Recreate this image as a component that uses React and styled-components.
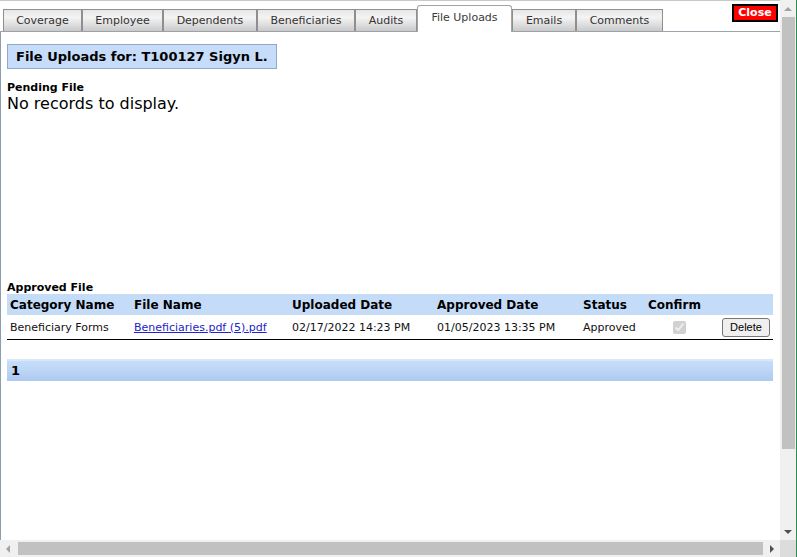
import React from 'react';
import styled, { createGlobalStyle } from 'styled-components';

const GlobalStyle = createGlobalStyle`
  html, body {
    margin: 0;
    padding: 0;
    background: #ffffff;
  }
  body {
    font-family: "DejaVu Sans", Verdana, sans-serif;
    color: #000000;
  }
`;

const StyledWindow = styled.div`
  width: 796px;
  height: 557px;
  border-right: 1px solid #2e8b57;
  display: grid;
  grid-template-columns: 780px 16px;
  grid-template-rows: 540px 17px;
  overflow: hidden;
  background: #ffffff;
`;

const StyledViewport = styled.div`
  overflow: hidden;
  border-top: 1px solid #c9c9c9;
  display: flex;
  flex-direction: column;
`;

const StyledTabBar = styled.div`
  display: flex;
  align-items: flex-end;
  height: 30px;
  padding-left: 3px;
  padding-right: 2px;
  border-bottom: 1px solid #9aa3ab;
  flex-shrink: 0;
`;

const StyledTab = styled.div`
  box-sizing: border-box;
  width: ${props => props.width}px;
  height: ${props => (props.active ? 27 : 22)}px;
  margin-bottom: ${props => (props.active ? '-1px' : '0')};
  border: 1px solid ${props => (props.active ? '#a4a4a4' : '#8f8f8f')};
  border-bottom: ${props => (props.active ? 'none' : '0')};
  border-radius: ${props => (props.active ? '3px 3px 0 0' : '0')};
  background: ${props => props.active
    ? '#ffffff'
    : 'linear-gradient(to bottom, #e6e6e6 0%, #f4f4f4 35%, #dedede 70%, #c9c9c9 100%)'};
  color: ${props => (props.active ? '#3a3a3a' : '#333333')};
  font-size: 11px;
  display: flex;
  align-items: center;
  justify-content: center;
  padding-bottom: ${props => (props.active ? '3px' : '0')};
  white-space: nowrap;
  cursor: pointer;
`;

const StyledClose = styled.button`
  margin-left: auto;
  align-self: flex-start;
  margin-top: 3px;
  width: 46px;
  height: 18px;
  box-sizing: border-box;
  border: 2px solid #000000;
  background: #ff0000;
  color: #ffffff;
  font-family: "DejaVu Sans", Verdana, sans-serif;
  font-weight: bold;
  font-size: 11px;
  padding: 0;
  line-height: 14px;
  cursor: pointer;
`;

const StyledPanel = styled.div`
  flex: 1;
  border-left: 1px solid #8d9eae;
  padding: 12px 7px 0 6px;
`;

const StyledTitle = styled.div`
  display: inline-block;
  box-sizing: border-box;
  height: 25px;
  padding: 0 8px;
  border: 1px solid #8ea9cc;
  background: #c6dcf8;
  font-weight: bold;
  font-size: 13px;
  line-height: 23px;
  white-space: nowrap;
`;

const StyledSection = styled.div`
  min-height: ${props => props.minHeight || 0}px;
  margin-top: ${props => props.top || 0}px;
`;

const StyledSectionLabel = styled.div`
  font-weight: bold;
  font-size: 11px;
  line-height: 13px;
`;

const StyledEmpty = styled.div`
  font-size: 16px;
  line-height: 20px;
`;

const StyledTable = styled.table`
  width: 766px;
  table-layout: fixed;
  border-collapse: collapse;
`;

const StyledHeadCell = styled.th`
  background: #c5dcf9;
  height: 21px;
  padding: 0 3px;
  text-align: left;
  font-size: 12px;
  font-weight: bold;
  white-space: nowrap;
`;

const StyledCell = styled.td`
  height: 24px;
  padding: 0 3px;
  font-size: 11px;
  white-space: nowrap;
  border-bottom: 1px solid #000000;
  text-align: ${props => props.align || 'left'};
  color: #111111;
`;

const StyledLink = styled.a`
  color: #2323c8;
  text-decoration: underline;
  cursor: pointer;
`;

const StyledCheck = styled.input`
  margin: 0 0 0 25px;
  width: 13px;
  height: 13px;
  vertical-align: middle;
`;

const StyledDelete = styled.button`
  font-family: "Liberation Sans", Arial, sans-serif;
  font-size: 11px;
  width: 48px;
  height: 19px;
  padding: 0;
  border: 1px solid #767676;
  border-radius: 3px;
  background: #efefef;
  color: #000000;
  vertical-align: middle;
  cursor: pointer;
`;

const StyledPager = styled.div`
  width: 766px;
  box-sizing: border-box;
  height: 22px;
  margin-top: 19px;
  border-top: 2px solid #d9e7fb;
  background: linear-gradient(to bottom, #c7ddf9 0%, #bcd5f6 50%, #adc9ef 100%);
  font-weight: bold;
  font-size: 13px;
  line-height: 20px;
  padding-left: 4px;
`;

const StyledVScroll = styled.div`
  background: #f0f0f0;
  display: flex;
  flex-direction: column;
  align-items: center;
`;

const StyledHScroll = styled.div`
  background: #f0f0f0;
  display: flex;
  align-items: center;
`;

const StyledCorner = styled.div`
  background: #dcdcdc;
`;

const StyledArrowBox = styled.div`
  width: 16px;
  height: 17px;
  display: flex;
  align-items: center;
  justify-content: center;
  flex-shrink: 0;
`;

const StyledArrow = styled.span`
  width: 0;
  height: 0;
  border-style: solid;
  border-color: transparent;
  ${props => props.dir === 'up' && `border-width: 0 4px 4px 4px; border-bottom-color: ${props.color};`}
  ${props => props.dir === 'down' && `border-width: 4px 4px 0 4px; border-top-color: ${props.color};`}
  ${props => props.dir === 'left' && `border-width: 4px 4px 4px 0; border-right-color: ${props.color};`}
  ${props => props.dir === 'right' && `border-width: 4px 0 4px 4px; border-left-color: ${props.color};`}
`;

const StyledVThumb = styled.div`
  width: 13px;
  height: 432px;
  background: #c1c1c1;
`;

const StyledTrack = styled.div`
  flex: 1;
  display: flex;
  align-items: ${props => (props.vertical ? 'flex-start' : 'center')};
  justify-content: center;
`;

const StyledHThumb = styled.div`
  width: 745px;
  height: 13px;
  background: #c1c1c1;
`;

const tabs = [
  { label: 'Coverage', width: 79 },
  { label: 'Employee', width: 81 },
  { label: 'Dependents', width: 94 },
  { label: 'Beneficiaries', width: 98 },
  { label: 'Audits', width: 62 },
  { label: 'File Uploads', width: 95, active: true },
  { label: 'Emails', width: 64 },
  { label: 'Comments', width: 87 },
];

const columns = [
  { title: 'Category Name', width: 124 },
  { title: 'File Name', width: 158 },
  { title: 'Uploaded Date', width: 145 },
  { title: 'Approved Date', width: 146 },
  { title: 'Status', width: 65 },
  { title: 'Confirm', width: 73 },
  { title: '', width: 55 },
];

const approvedFiles = [
  {
    id: 1,
    category: 'Beneficiary Forms',
    fileName: 'Beneficiaries.pdf (5).pdf',
    uploaded: '02/17/2022 14:23 PM',
    approved: '01/05/2023 13:35 PM',
    status: 'Approved',
    confirmed: true,
  },
];

const TabBar = () => (
  <StyledTabBar>
    {tabs.map(tab => (
      <StyledTab key={tab.label} width={tab.width} active={tab.active}>
        {tab.label}
      </StyledTab>
    ))}
    <StyledClose>Close</StyledClose>
  </StyledTabBar>
);

const ApprovedTable = ({ list }) => (
  <StyledTable>
    <colgroup>
      {columns.map((col, i) => <col key={i} style={{ width: col.width }} />)}
    </colgroup>
    <thead>
      <tr>
        {columns.map((col, i) => <StyledHeadCell key={i}>{col.title}</StyledHeadCell>)}
      </tr>
    </thead>
    <tbody>
      {list.map(item => (
        <tr key={item.id}>
          <StyledCell>{item.category}</StyledCell>
          <StyledCell><StyledLink>{item.fileName}</StyledLink></StyledCell>
          <StyledCell>{item.uploaded}</StyledCell>
          <StyledCell>{item.approved}</StyledCell>
          <StyledCell>{item.status}</StyledCell>
          <StyledCell><StyledCheck type="checkbox" checked={item.confirmed} disabled readOnly /></StyledCell>
          <StyledCell align="right"><StyledDelete>Delete</StyledDelete></StyledCell>
        </tr>
      ))}
    </tbody>
  </StyledTable>
);

const App = () => {
  return (
    <>
      <GlobalStyle />
      <StyledWindow>
        <StyledViewport>
          <TabBar />
          <StyledPanel>
            <StyledTitle>File Uploads for: T100127 Sigyn L.</StyledTitle>
            <StyledSection top={12} minHeight={200}>
              <StyledSectionLabel>Pending File</StyledSectionLabel>
              <StyledEmpty>No records to display.</StyledEmpty>
            </StyledSection>
            <StyledSection>
              <StyledSectionLabel>Approved File</StyledSectionLabel>
              <ApprovedTable list={approvedFiles} />
              <StyledPager>1</StyledPager>
            </StyledSection>
          </StyledPanel>
        </StyledViewport>
        <StyledVScroll>
          <StyledArrowBox><StyledArrow dir="up" color="#a3a3a3" /></StyledArrowBox>
          <StyledTrack vertical>
            <StyledVThumb />
          </StyledTrack>
          <StyledArrowBox><StyledArrow dir="down" color="#505050" /></StyledArrowBox>
        </StyledVScroll>
        <StyledHScroll>
          <StyledArrowBox><StyledArrow dir="left" color="#a3a3a3" /></StyledArrowBox>
          <StyledTrack>
            <StyledHThumb />
          </StyledTrack>
          <StyledArrowBox><StyledArrow dir="right" color="#505050" /></StyledArrowBox>
        </StyledHScroll>
        <StyledCorner />
      </StyledWindow>
    </>
  );
};

export default App;
